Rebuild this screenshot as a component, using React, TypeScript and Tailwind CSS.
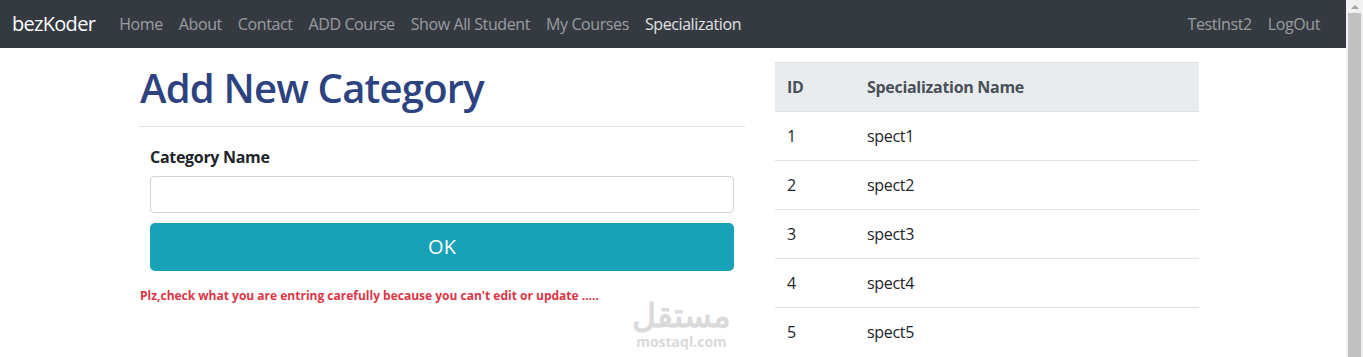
import React from "react";

const navLinks = ["Home", "About", "Contact", "ADD Course", "Show All Student", "My Courses"];

const specs = [
  { id: 1, name: "spect1" },
  { id: 2, name: "spect2" },
  { id: 3, name: "spect3" },
  { id: 4, name: "spect4" },
  { id: 5, name: "spect5" },
];

function Navbar() {
  return (
    <nav className="flex h-12 items-center bg-[#343a40] px-3 tracking-[-0.4px]">
      <span className="mr-[16px] text-[20px] tracking-[-0.7px] text-white">bezKoder</span>
      <ul className="flex items-center">
        {navLinks.map((l) => (
          <li key={l} className="px-2 text-[16px] text-white/50">
            {l}
          </li>
        ))}
        <li className="px-2 text-[16px] text-white/85">Specialization</li>
      </ul>
      <ul className="ml-auto flex items-center">
        <li className="px-2 text-[16px] text-white/50">TestInst2</li>
        <li className="pl-2 pr-[14px] text-[16px] text-white/50">LogOut</li>
      </ul>
    </nav>
  );
}

function CategoryForm() {
  return (
    <div className="w-[606px]">
      <h1 className="pt-[2px] pl-px text-[40px] leading-[48px] font-semibold tracking-[-0.8px] text-[#2d4381]">
        Add New Category
      </h1>
      <hr className="mt-[14px] border-t border-[#e2e3e5]" />
      <div className="px-[11px] pt-[18px]">
        <label className="block text-[16px] leading-6 font-bold tracking-[-0.3px] text-[#212529]">
          Category Name
        </label>
        <input
          type="text"
          className="mt-[7px] block h-[37px] w-full rounded border border-[#ced4da] bg-white px-3"
        />
        <button className="mt-[10px] flex h-[48px] w-full items-center justify-center rounded-[5px] bg-[#17a2b8] text-[20px] text-white">
          OK
        </button>
      </div>
      <p className="mt-[16px] pl-px text-[12px] font-bold text-[#dc3545]">
        Plz,check what you are entring carefully because you can't edit or update .....
      </p>
    </div>
  );
}

function SpecTable() {
  return (
    <table className="w-[424px] border-collapse text-[16px] tracking-[-0.3px]">
      <thead>
        <tr className="h-[49px] border-t border-[#dee2e6] bg-[#e9ecef] text-left text-[#495057]">
          <th className="w-[80px] px-3 font-bold">ID</th>
          <th className="px-3 font-bold">Specialization Name</th>
        </tr>
      </thead>
      <tbody>
        {specs.map((s) => (
          <tr key={s.id} className="h-[49px] border-t border-[#dee2e6] text-[#212529]">
            <td className="px-3">{s.id}</td>
            <td className="px-3">{s.name}</td>
          </tr>
        ))}
      </tbody>
    </table>
  );
}

function Scrollbar() {
  return (
    <div className="flex w-[17px] shrink-0 flex-col bg-[#f1f1f1]">
      <div className="flex h-[13px] items-center justify-center">
        <div className="h-0 w-0 border-x-[4px] border-b-[4px] border-x-transparent border-b-[#a3a3a3]" />
      </div>
      <div className="mx-[2px] flex-1 bg-[#c1c1c1]" />
    </div>
  );
}

export default function App() {
  return (
    <div
      className="flex h-[357px] w-[1363px] overflow-hidden bg-white"
      style={{ fontFamily: '"Segoe UI", "Open Sans", "Noto Sans", sans-serif' }}
    >
      <div className="flex min-w-0 flex-1 flex-col">
        <Navbar />
        <div className="flex pl-[139px] pt-[14px]">
          <div className="relative">
            <CategoryForm />
            <div className="absolute top-[238px] left-[493px] flex flex-col items-center gap-[5px] text-[#dadada]">
              <span
                className="text-[33px] leading-[30px] font-bold"
                style={{ fontFamily: '"Noto Sans", sans-serif' }}
              >
                مستقل
              </span>
              <span className="text-[14px] leading-[14px] font-bold">mostaql.com</span>
            </div>
          </div>
          <div className="ml-[30px]">
            <SpecTable />
          </div>
        </div>
      </div>
      <Scrollbar />
    </div>
  );
}
